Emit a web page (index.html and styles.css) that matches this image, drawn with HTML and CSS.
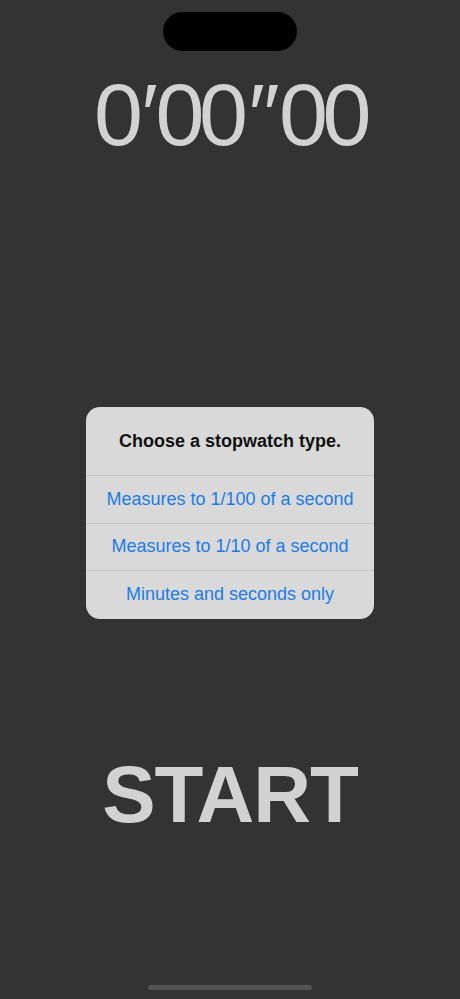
FILE: index.html
```html
<!DOCTYPE html>
<html lang="en">
<head>
    <meta charset="UTF-8">
    <meta name="viewport" content="width=device-width, initial-scale=1.0">
    <title>Stopwatch</title>
    <link rel="stylesheet" href="styles.css">
</head>
<body>
    <div class="screen">
        <div class="island"></div>
        <div class="time">0<span class="mark">′</span>00<span class="mark wide">″</span>00</div>

        <div class="middle">
            <div class="alert">
                <div class="alert-title">Choose a stopwatch type.</div>
                <button class="alert-option">Measures to 1/100 of a second</button>
                <button class="alert-option">Measures to 1/10 of a second</button>
                <button class="alert-option">Minutes and seconds only</button>
            </div>
        </div>

        <div class="start">START</div>
        <div class="home-bar"></div>
    </div>
</body>
</html>
```

FILE: styles.css
```css
* {
    box-sizing: border-box;
}
body {
    margin: 0;
    background-color: #333333;
    font-family: "Liberation Sans", Arial, sans-serif;
}
.screen {
    width: 460px;
    height: 999px;
    display: flex;
    flex-direction: column;
    align-items: center;
    padding-top: 12px;
}
.island {
    width: 134px;
    height: 39px;
    background-color: #000;
    border-radius: 20px;
}
.time {
    margin-top: 14px;
    color: #d2d2d2;
    font-size: 88px;
    line-height: 100px;
    letter-spacing: -5.5px;
}
.mark {
    display: inline-block;
    margin: 0 3px 0 4px;
}
.mark.wide {
    margin: 0 5px 0 6px;
}
.middle {
    margin-top: 242px;
}
.alert {
    width: 288px;
    background-color: #d9d9d9;
    border-radius: 14px;
    display: flex;
    flex-direction: column;
    overflow: hidden;
}
.alert-title {
    height: 69px;
    display: flex;
    align-items: center;
    justify-content: center;
    font-size: 18px;
    font-weight: bold;
    color: #111;
    border-bottom: 1px solid #c4c4c4;
}
.alert-option {
    height: 47.5px;
    border: none;
    background: none;
    font-family: inherit;
    font-size: 18px;
    color: #1c7ce6;
    border-bottom: 1px solid #c4c4c4;
}
.alert-option:last-child {
    border-bottom: none;
}
.start {
    margin-top: 136px;
    color: #d2d2d2;
    font-size: 80px;
    font-weight: bold;
    line-height: 80px;
    letter-spacing: -1px;
}
.home-bar {
    margin-top: auto;
    margin-bottom: 9px;
    width: 164px;
    height: 5px;
    border-radius: 3px;
    background-color: #555;
}
```
